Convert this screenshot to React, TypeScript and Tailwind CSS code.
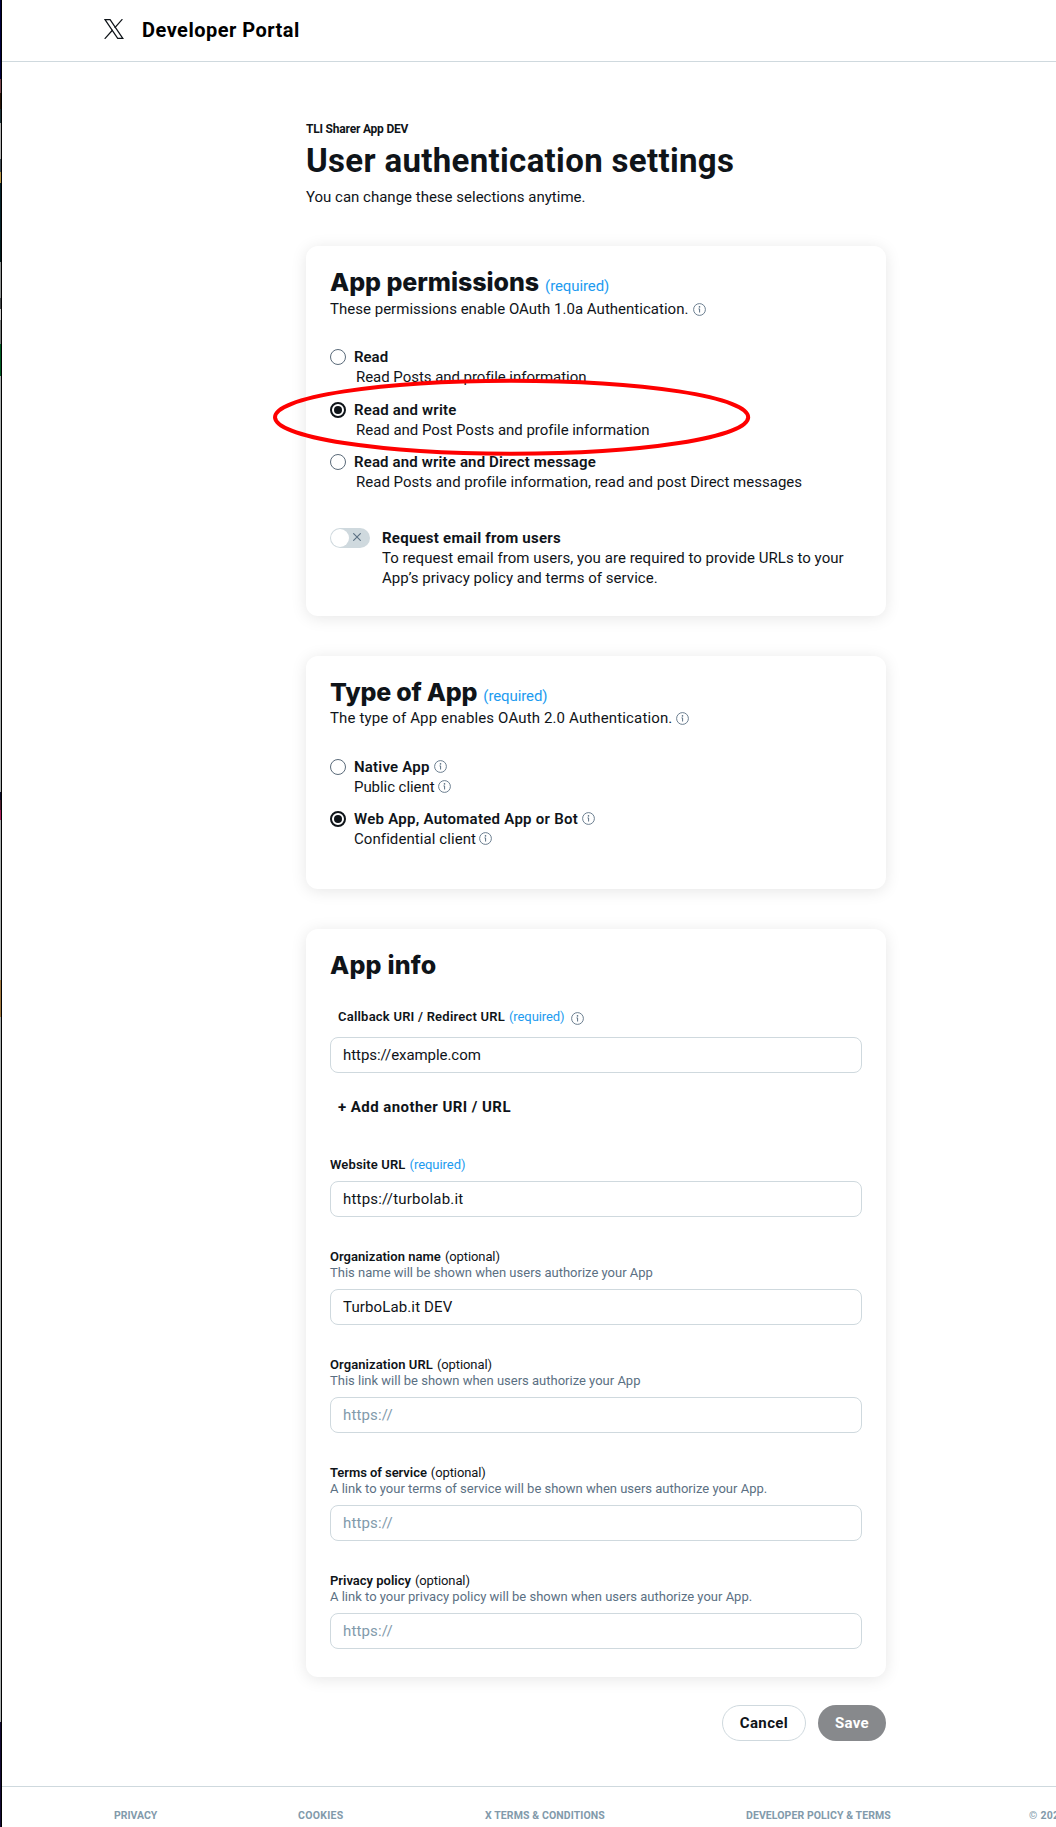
import type { ReactNode } from 'react';

function InfoIcon({ className = 'ml-[5px]' }: { className?: string }) {
  return (
    <svg viewBox="0 0 13 13" className={`h-[13px] w-[13px] shrink-0 text-[#5b7083] ${className}`} fill="none">
      <circle cx="6.5" cy="6.5" r="5.9" stroke="currentColor" strokeWidth="0.9" />
      <circle cx="6.5" cy="3.9" r="0.8" fill="currentColor" />
      <path d="M5.5 5.9h1.1v3.6" stroke="currentColor" strokeWidth="1" />
    </svg>
  );
}

function XLogo() {
  return (
    <svg viewBox="0 0 20 20" className="h-5 w-5" fill="none" stroke="#0f1419" strokeWidth="1.25">
      <path d="M1 .7H6.1L18.8 19.3H13.7Z" />
      <path d="M18.4 .2L10.7 8.8M8.6 11L.7 19.8" />
    </svg>
  );
}

function Card({ className, children }: { className: string; children: ReactNode }) {
  return (
    <section
      className={`relative w-[580px] rounded-[12px] bg-white px-6 pt-5 shadow-[0_2px_16px_rgba(0,0,0,0.10)] ${className}`}
    >
      {children}
    </section>
  );
}

function Heading({ children, required, className = '' }: { children: string; required?: boolean; className?: string }) {
  return (
    <div className="flex h-8 items-baseline">
      <h2 className={`font-[Inter,sans-serif] text-[25px] leading-8 font-extrabold whitespace-nowrap ${className}`}>
        {children}
      </h2>
      {required && <span className="ml-[6px] text-[15px] leading-5 tracking-[-0.1px] text-[#1d9bf0]">(required)</span>}
    </div>
  );
}

function Radio({ checked }: { checked?: boolean }) {
  return checked ? (
    <span className="mt-[2px] flex h-4 w-4 shrink-0 items-center justify-center rounded-full border-2 border-[#0f1419]">
      <span className="h-2 w-2 rounded-full bg-[#0f1419]" />
    </span>
  ) : (
    <span className="mt-[2px] h-4 w-4 shrink-0 rounded-full border border-[#5b6b7a]" />
  );
}

type OptionProps = {
  label: string;
  detail: string;
  checked?: boolean;
  info?: boolean;
  labelClass?: string;
  detailClass?: string;
};

function Option({ label, detail, checked, info, labelClass = '', detailClass = '' }: OptionProps) {
  return (
    <div className="flex">
      <Radio checked={checked} />
      <div className="ml-2 text-[15px] leading-5 whitespace-nowrap">
        <div className={`flex items-center font-semibold ${labelClass}`}>
          {label}
          {info && <InfoIcon className="ml-1 mb-px" />}
        </div>
        <div className={`flex items-center ${detailClass}`}>
          {detail}
          {info && <InfoIcon className="ml-[3px] mb-px" />}
        </div>
      </div>
    </div>
  );
}

function TextInput({ value, className }: { value?: string; className: string }) {
  return (
    <input
      type="text"
      defaultValue={value}
      placeholder="https://"
      className={`block h-9 w-[532px] rounded-lg border border-[#cfd9de] bg-white px-3 pb-px text-[15px] text-[#0f1419] placeholder:text-[#829aab] ${className}`}
    />
  );
}

type FieldProps = { label: string; hint: string; value?: string; labelClass?: string; inputClass?: string };

function Field({ label, hint, value, labelClass = '', inputClass = 'tracking-[0.15px]' }: FieldProps) {
  return (
    <div className="mt-8 text-[13px] leading-4 whitespace-nowrap">
      <div>
        <span className={`font-semibold ${labelClass}`}>{label}</span>
        <span className="ml-1 tracking-[-0.1px]">(optional)</span>
      </div>
      <div className="text-[#5b7083]">{hint}</div>
      <TextInput value={value} className={`mt-2 ${inputClass}`} />
    </div>
  );
}

const strip: [string, string][] = [
  ['h-[79px]', 'bg-[#00003c]'],
  ['h-[14px]', 'bg-[#77454d]'],
  ['h-[16px]', 'bg-[#2a1608]'],
  ['h-[14px]', 'bg-[#1d3238]'],
  ['h-[36px]', 'bg-[#b0b0b0]'],
  ['h-[13px]', 'bg-[#3f4a52]'],
  ['h-[11px]', 'bg-[#b59347]'],
  ['h-[57px]', 'bg-[#07222b]'],
  ['h-[22px]', 'bg-[#011a1c]'],
  ['h-[36px]', 'bg-[#8f9393]'],
  ['h-[11px]', 'bg-[#44484a]'],
  ['h-[11px]', 'bg-[#cccccc]'],
  ['h-[24px]', 'bg-[#777b7b]'],
  ['h-[32px]', 'bg-[#005a22]'],
  ['h-[416px]', 'bg-[#a9adad]'],
  ['h-[8px]', 'bg-[#0c0c2a]'],
  ['h-[10px]', 'bg-[#4c2030]'],
  ['h-[10px]', 'bg-[#a8205c]'],
  ['h-[160px]', 'bg-[#a9adad]'],
  ['h-[37px]', 'bg-[#a07840]'],
  ['h-[705px]', 'bg-[#a9adad]'],
  ['h-[105px]', 'bg-[#130a33]'],
];

export default function App() {
  return (
    <div className="flex h-[1827px] w-[1056px] overflow-hidden bg-white font-[Roboto,sans-serif] text-[#0f1419]">
      <div className="w-[2px] shrink-0 border-r border-black">
        {strip.map(([h, bg], i) => (
          <div key={i} className={`${h} ${bg}`} />
        ))}
      </div>

      <div className="w-[1054px] shrink-0">
        <header className="flex h-[62px] items-center border-b border-[#cfd9de] pl-[102px]">
          <div className="-mt-[3px]">
            <XLogo />
          </div>
          <span className="mb-[2px] ml-[18px] text-[20px] leading-6 font-bold tracking-[0.48px] whitespace-nowrap text-black">
            Developer Portal
          </span>
        </header>

        <main className="ml-[304px] w-[580px] pt-[59px]">
          <div className="text-[12px] leading-4 font-bold tracking-[-0.2px]">TLI Sharer App DEV</div>
          <h1 className="mt-[4px] text-[33px] leading-10 font-bold tracking-[0.33px] whitespace-nowrap">
            User authentication settings
          </h1>
          <p className="mt-[6px] text-[15px] leading-5">You can change these selections anytime.</p>

          <Card className="mt-[39px] h-[370px]">
            <Heading required className="tracking-[-0.05px]">App permissions</Heading>
            <div className="mt-px flex items-center text-[15px] leading-5 tracking-[0.02px]">
              These permissions enable OAuth 1.0a Authentication.
              <InfoIcon />
            </div>
            <div className="mt-7">
              <Option label="Read" detail="Read Posts and profile information" detailClass="ml-[2px] tracking-[-0.04px]" />
            </div>
            <div className="mt-[13px]">
              <Option
                checked
                label="Read and write"
                detail="Read and Post Posts and profile information"
                labelClass="tracking-[0.18px]"
                detailClass="ml-[2px] tracking-[-0.03px]"
              />
            </div>
            <div className="mt-3">
              <Option
                label="Read and write and Direct message"
                detail="Read Posts and profile information, read and post Direct messages"
                labelClass="tracking-[0.15px]"
                detailClass="ml-[2px] tracking-[0.01px]"
              />
            </div>
            <div className="mt-9 flex">
              <div className="flex h-5 w-10 shrink-0 items-center justify-between rounded-full bg-[#cfd9de] px-px">
                <span className="h-[18px] w-[18px] rounded-full bg-white" />
                <svg viewBox="0 0 8 8" className="mr-2 mb-[2px] h-2 w-2" stroke="#5b7083" strokeWidth="1.1">
                  <path d="M.3 .3L7.7 7.7M7.7 .3L.3 7.7" />
                </svg>
              </div>
              <div className="ml-3 text-[15px] leading-5 whitespace-nowrap">
                <div className="font-bold tracking-[0.24px]">Request email from users</div>
                <div className="tracking-[0.04px]">To request email from users, you are required to provide URLs to your</div>
                <div className="tracking-[0.03px]">App’s privacy policy and terms of service.</div>
              </div>
            </div>
            <svg viewBox="0 0 478 78" className="absolute top-[132px] -left-[33px] h-[78px] w-[478px]" fill="none">
              <ellipse cx="238.6" cy="39.2" rx="236.6" ry="36.5" stroke="#fe0000" strokeWidth="4" />
            </svg>
          </Card>

          <Card className="mt-10 h-[233px]">
            <Heading required className="tracking-[-0.2px]">Type of App</Heading>
            <div className="flex items-center text-[15px] leading-5 tracking-[0.14px]">
              The type of App enables OAuth 2.0 Authentication.
              <InfoIcon className="ml-1" />
            </div>
            <div className="mt-[29px]">
              <Option info label="Native App" detail="Public client" labelClass="tracking-[0.2px]" detailClass="tracking-[-0.06px]" />
            </div>
            <div className="mt-3">
              <Option
                info
                checked
                label="Web App, Automated App or Bot"
                detail="Confidential client"
                labelClass="tracking-[0.27px]"
                detailClass="tracking-[0.08px]"
              />
            </div>
          </Card>

          <Card className="mt-10 h-[748px]">
            <Heading className="tracking-[0.2px]">App info</Heading>

            <div className="mt-7 flex h-4 items-center pl-2 text-[13px] leading-4">
              <span className="font-semibold tracking-[0.22px]">Callback URI / Redirect URL</span>
              <span className="ml-1 tracking-[-0.09px] text-[#1d9bf0]">(required)</span>
              <InfoIcon className="mt-[3px] ml-[7px]" />
            </div>
            <TextInput value="https://example.com" className="mt-3 tracking-[-0.06px]" />
            <button type="button" className="mt-6 ml-2 block text-[15px] leading-5 font-bold tracking-[0.44px]">
              + Add another URI / URL
            </button>

            <div className="mt-10 text-[13px] leading-4">
              <span className="font-semibold tracking-[0.14px]">Website URL</span>
              <span className="ml-1 tracking-[-0.05px] text-[#1d9bf0]">(required)</span>
            </div>
            <TextInput value="https://turbolab.it" className="mt-2 tracking-[0.2px]" />

            <Field
              label="Organization name"
              hint="This name will be shown when users authorize your App"
              value="TurboLab.it DEV"
              labelClass="tracking-[0.04px]"
              inputClass="tracking-[0.13px]"
            />
            <Field label="Organization URL" hint="This link will be shown when users authorize your App" labelClass="tracking-[0.09px]" />
            <Field
              label="Terms of service"
              hint="A link to your terms of service will be shown when users authorize your App."
              labelClass="tracking-[-0.05px]"
            />
            <Field
              label="Privacy policy"
              hint="A link to your privacy policy will be shown when users authorize your App."
            />
          </Card>

          <div className="mt-7 flex justify-end gap-3 text-[15px] leading-5 font-bold">
            <button type="button" className="h-9 w-[84px] rounded-full border border-[#cfd9de] pb-px tracking-[0.39px]">
              Cancel
            </button>
            <button type="button" className="h-9 w-[68px] rounded-full bg-[#87898c] pb-px tracking-[0.31px] text-white">
              Save
            </button>
          </div>
        </main>

        <footer className="mt-[45px] flex h-[41px] border-t border-[#cfd9de] pt-[21px] pl-[112px] text-[10.5px] leading-4 font-bold whitespace-nowrap text-[#829aab]">
          <span className="w-[184px] shrink-0">PRIVACY</span>
          <span className="w-[187px] shrink-0 tracking-[0.3px]">COOKIES</span>
          <span className="w-[261px] shrink-0 tracking-[0.1px]">X TERMS &amp; CONDITIONS</span>
          <span className="w-[283px] shrink-0 tracking-[0.08px]">DEVELOPER POLICY &amp; TERMS</span>
          <span className="shrink-0 tracking-[0.3px]">© 202</span>
        </footer>
      </div>
    </div>
  );
}
